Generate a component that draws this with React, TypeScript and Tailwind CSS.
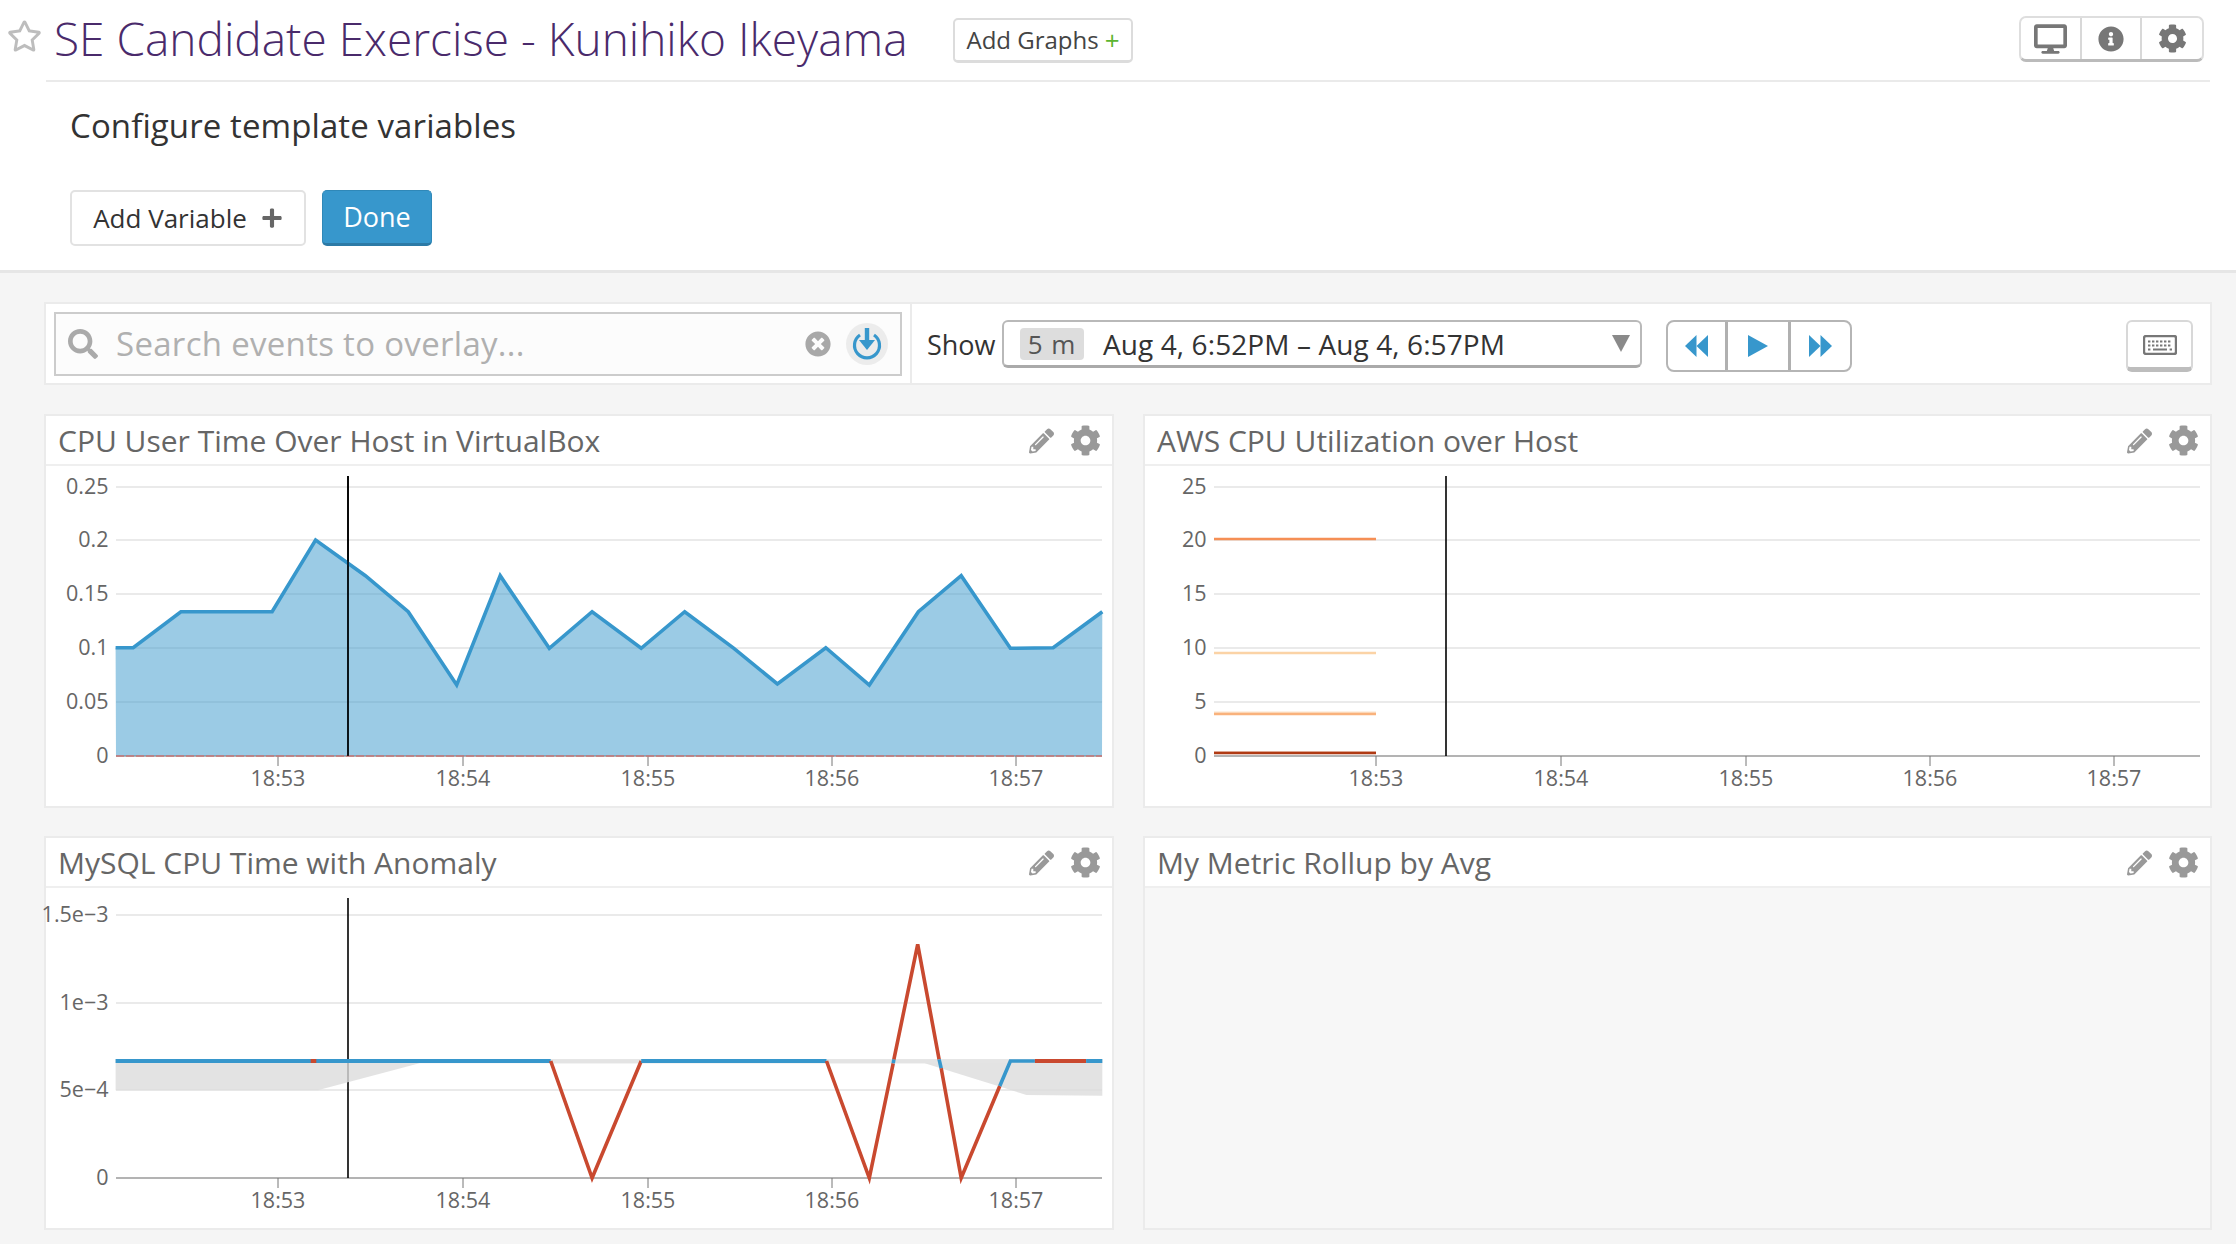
import React from "react";
import { FaRegStar, FaPlus, FaDesktop, FaInfoCircle, FaCog, FaPencilAlt, FaSearch, FaTimesCircle } from "react-icons/fa";

const sans = "font-['Open_Sans','Noto_Sans',sans-serif]";
const z1 = (x: number) => x / 1.425 + 30;

const toPts = (pts: number[][], oy: number) =>
  pts.map(([x, y]) => `${z1(x).toFixed(1)},${(y / 3 + oy).toFixed(1)}`).join(" ");

const cpu = [[122,713],[147,713],[215,605],[345,605],[407,390],[478,497],[539,605],[608,825],[670,497],[740,715],[801,605],[871,715],[933,605],[1003,715],[1065,822],[1134,713],[1196,825],[1266,605],[1327,497],[1397,715],[1458,713],[1528,605]];

const ticks = [["18:53", 278], ["18:54", 463], ["18:55", 648], ["18:56", 832], ["18:57", 1016]] as const;

function Axis({ base, labels, top, lineColor = "#9a9a9a" }: { base: number; labels: [string, number][]; top: number; lineColor?: string }) {
  return (
    <g fontFamily="'Open Sans', sans-serif" fontSize="21.5" fill="#666">
      {labels.map(([t, y]) => (
        <g key={t}>
          {t !== "0" && <line x1="116" x2="1102" y1={y} y2={y} stroke="#e3e3e3" strokeWidth="1.6" />}
          <text x="108.5" y={y + 7} textAnchor="end">{t}</text>
        </g>
      ))}
      <line x1="116" x2="1102" y1={base} y2={base} stroke={lineColor} strokeWidth="1.4" />
      {ticks.map(([t, x]) => (
        <g key={t}>
          <line x1={x} x2={x} y1={base} y2={base + 10} stroke="#777" strokeWidth="1" />
          <text x={x} y={base + 30} textAnchor="middle">{t}</text>
        </g>
      ))}
      <line x1="348" x2="348" y1={top} y2={base} stroke="#000" strokeWidth="1.6" />
    </g>
  );
}

function Chart1() {
  return (
    <svg viewBox="46 466 1066 340" className="block w-full h-[340px]">
      <Axis base={756} top={476} labels={[["0.25",487],["0.2",540],["0.15",594],["0.1",648],["0.05",702],["0",756]]} />
      <polygon points={`116,756 ${toPts(cpu, 410)} 1102,756`} fill="#3797cc" fillOpacity="0.5" />
      <polyline points={toPts(cpu, 410)} fill="none" stroke="#3797cc" strokeWidth="3.6" strokeLinejoin="miter" />
      <line x1="116" x2="1102" y1="756" y2="756" stroke="#c77" strokeWidth="1.4" strokeDasharray="8 2" />
      <line x1="348" x2="348" y1="476" y2="756" stroke="#000" strokeWidth="1.6" />
    </svg>
  );
}

function Chart2() {
  const seg = (y: number, c: string, w = 2.5) => <line x1="116" x2="278" y1={y} y2={y} stroke={c} strokeWidth={w} />;
  return (
    <svg viewBox="47 466 1065 340" className="block w-full h-[340px]">
      <Axis base={756} top={476} labels={[["25",487],["20",540],["15",594],["10",648],["5",702],["0",756]]} />
      {seg(540, "#e8e8e8", 2)}
      {seg(539, "#f58f55")}
      {seg(653, "#fbd3a6")}
      {seg(712.5, "#fce3cb", 2)}
      {seg(714, "#f9b27c")}
      {seg(752, "#e6b9a5", 1.5)}
      {seg(753, "#b03a14")}
    </svg>
  );
}

function Chart3() {
  const red = "#c9492f";
  const blue = "#3797cc";
  const line = (pts: number[][], c: string, w = 3.6) => (
    <polyline points={toPts(pts, 830)} fill="none" stroke={c} strokeWidth={w} />
  );
  const band = [[122,688],[1528,688],[1528,797],[1420,795],[1275,700],[555,700],[410,781],[122,781]];
  return (
    <svg viewBox="46 888 1066 340" className="block w-full h-[340px] overflow-visible">
      <Axis base={1178} top={898} labels={[["1.5e\u22123",915],["1e\u22123",1003],["5e\u22124",1090],["0",1178]]} />
      <polygon points={toPts(band, 830)} fill="#dcdcdc" fillOpacity="0.8" />
      <polygon points={toPts([[742,688],[1528,688],[1528,700],[742,700]], 830)} fill="#e4e4e4" />
      {line([[122,693],[742,693]], blue, 4)}
      {line([[400,693],[408,693]], red, 4)}
      {line([[742,693],[801,1044],[871,693]], red)}
      {line([[871,693],[1135,693]], blue, 4)}
      {line([[1135,693],[1196,1044],[1230,700]], red)}
      {line([[1230,700],[1231,688]], blue)}
      {line([[1231,688],[1265,343],[1295.5,688]], red)}
      {line([[1295.5,688],[1298.5,715]], blue)}
      {line([[1298.5,715],[1327,1044],[1382,768]], red)}
      {line([[1382,768],[1397,693],[1432,693]], blue)}
      {line([[1432,693],[1505,693]], red, 4)}
      {line([[1505,693],[1528,693]], blue, 4)}
    </svg>
  );
}

function Panel({ title, children, className = "bg-white" }: { title: string; children?: React.ReactNode; className?: string }) {
  return (
    <div className={`border-2 border-[#ebebeb] h-[394px] flex flex-col ${className}`}>
      <div className="h-[50px] bg-white border-b-2 border-[#efefef] flex items-center pl-[12px] pr-[11px] shrink-0">
        <span className="text-[30px] leading-none text-[#666] flex-1 font-normal pt-[2px]">{title}</span>
        <FaPencilAlt className="text-[#999] w-[25px] h-[26px] mr-[16px] mt-[2px]" />
        <FaCog className="text-[#999] w-[31px] h-[31px]" />
      </div>
      {children}
    </div>
  );
}

function Triangles({ dir, n }: { dir: "l" | "r"; n: 1 | 2 }) {
  const w = n === 2 ? 23 : 20;
  return (
    <svg width={w} height="22" viewBox={`0 0 ${w} 22`} className={dir === "l" ? "-scale-x-100" : ""}>
      {n === 2 ? (
        <>
          <polygon points="0,0 11.5,11 0,22" fill="#3797cc" />
          <polygon points="11.5,0 23,11 11.5,22" fill="#3797cc" />
        </>
      ) : (
        <polygon points="0,0 20,11 0,22" fill="#3797cc" />
      )}
    </svg>
  );
}

export default function App() {
  return (
    <div className={`w-[2236px] h-[1244px] overflow-hidden bg-[#f5f5f5] ${sans}`}>
      <div className="bg-white h-[273px] border-b-[3px] border-[#e6e6e6]">
        <div className="flex h-[82px]">
          <div className="w-[46px] pl-[7px] pt-[20px] shrink-0">
            <FaRegStar className="text-[#bdbdbd] w-[35px] h-[32px]" />
          </div>
          <div className="flex-1 mr-[26px] border-b-2 border-[#eaeaea] flex items-start pl-[8px]">
            <h1 className="text-[46px] leading-[77px] font-light text-[#4a2a6b] w-[899px] shrink-0 whitespace-nowrap">SE Candidate Exercise - Kunihiko Ikeyama</h1>
            <button className="mt-[18px] w-[180px] h-[45px] border-2 border-[#dcdcdc] border-b-[3px] rounded-[5px] text-[24px] leading-none text-[#444] flex items-center justify-center gap-[6px] whitespace-nowrap">
              Add Graphs <span className="text-[#5cb531] text-[26px] font-medium">+</span>
            </button>
            <div className="ml-auto mr-[6px] mt-[16px] h-[46px] w-[185px] border-2 border-[#dedede] border-b-[3px] border-b-[#bbbbbb] rounded-[7px] flex items-center text-[#777]">
              <div className="w-[61px] h-full flex items-center justify-center border-r-2 border-[#d8d8d8]"><FaDesktop className="w-[33px] h-[30px]" /></div>
              <div className="w-[60px] h-full flex items-center justify-center border-r-2 border-[#d8d8d8]"><FaInfoCircle className="w-[26px] h-[26px]" /></div>
              <div className="flex-1 h-full flex items-center justify-center"><FaCog className="w-[29px] h-[29px]" /></div>
            </div>
          </div>
        </div>
        <div className="pl-[70px] pt-[22px]">
          <h2 className="text-[33px] leading-[44px] text-[#333] font-medium tracking-[0.1px]">Configure template variables</h2>
          <div className="flex gap-[16px] mt-[42px]">
            <button className="w-[236px] h-[56px] border-2 border-[#e2e2e2] rounded-[5px] text-[26px] text-[#333] flex items-center justify-center gap-[14px]">
              Add Variable <FaPlus className="text-[#666] w-[22px] h-[22px]" />
            </button>
            <button className="w-[110px] h-[56px] bg-[#3797cc] border border-[#2f88b8] border-b-[3px] border-b-[#2c7aa6] rounded-[5px] text-[27px] text-white font-medium">Done</button>
          </div>
        </div>
      </div>

      <div className="pl-[44px] pr-[24px] pt-[29px]">
        <div className="h-[83px] bg-white border-2 border-[#ebebeb] flex">
          <div className="w-[866px] border-r-2 border-[#ebebeb] pl-[8px] pt-[8px] shrink-0">
            <div className="w-[848px] h-[64px] bg-[#fcfcfc] border-2 border-[#cccccc] flex items-center pl-[12px] pr-[12px]">
              <FaSearch className="text-[#aaa] w-[30px] h-[30px] shrink-0" />
              <span className="ml-[18px] text-[33px] text-[#b0b0b0] flex-1 tracking-[0.3px] whitespace-nowrap">Search events to overlay...</span>
              <FaTimesCircle className="text-[#a8a8a8] w-[26px] h-[26px] shrink-0" />
              <div className="ml-[15px] w-[42px] h-[42px] rounded-full bg-[#ececec] flex items-center justify-center shrink-0">
                <svg width="30" height="32" viewBox="0 0 30 32">
                  <path d="M8 7 A12.5 12.5 0 1 0 22 7" fill="none" stroke="#3797cc" strokeWidth="3.2" />
                  <rect x="12.8" y="0" width="4.4" height="13" fill="#3797cc" />
                  <polygon points="7,12 23,12 15,22" fill="#3797cc" />
                </svg>
              </div>
            </div>
          </div>
          <div className="flex-1 flex items-start pt-[16px] pl-[15px] pr-[17px]">
            <span className="text-[27px] leading-[50px] text-[#333] w-[75px] shrink-0">Show</span>
            <div className="w-[640px] h-[48px] border-2 border-[#b9b9b9] border-b-[3px] border-b-[#aaaaaa] rounded-[6px] flex items-center pl-[16px] pr-[10px] shrink-0">
              <span className="w-[64px] h-[32px] rounded-[4px] bg-[#dddddd] text-[26px] leading-[32px] text-[#555] text-center tracking-[1px]">5 m</span>
              <span className="ml-[19px] text-[28px] text-[#333] flex-1 whitespace-nowrap tracking-[0.1px]">Aug 4, 6:52PM – Aug 4, 6:57PM</span>
              <svg width="18" height="17" viewBox="0 0 18 17"><polygon points="0,0 18,0 9,17" fill="#8a8a8a" /></svg>
            </div>
            <div className="ml-[24px] w-[186px] h-[52px] border-2 border-[#b5b5b5] rounded-[8px] flex shrink-0">
              <div className="w-[60px] flex items-center justify-center border-r-[3px] border-[#b0b0b0]"><Triangles dir="l" n={2} /></div>
              <div className="w-[63px] flex items-center justify-center border-r-[3px] border-[#b0b0b0]"><Triangles dir="r" n={1} /></div>
              <div className="flex-1 flex items-center justify-center"><Triangles dir="r" n={2} /></div>
            </div>
            <div className="ml-auto w-[67px] h-[52px] border-2 border-[#d8d8d8] border-b-[5px] border-b-[#bdbdbd] rounded-[6px] flex items-center justify-center shrink-0">
              <svg width="34" height="20" viewBox="0 0 34 20">
                <rect x="1" y="1" width="32" height="18" rx="2" fill="none" stroke="#777" strokeWidth="2.4" />
                <path d="M5 6.5h24M5 10.5h24" stroke="#777" strokeWidth="2" strokeDasharray="2.4 1.6" />
                <path d="M5 14.5h2.4M10 14.5h14M26.6 14.5h2.4" stroke="#777" strokeWidth="2" />
              </svg>
            </div>
          </div>
        </div>

        <div className="grid grid-cols-[1070px_1069px] gap-x-[29px] gap-y-[28px] mt-[29px]">
          <Panel title="CPU User Time Over Host in VirtualBox"><Chart1 /></Panel>
          <Panel title="AWS CPU Utilization over Host"><Chart2 /></Panel>
          <Panel title="MySQL CPU Time with Anomaly"><Chart3 /></Panel>
          <Panel title="My Metric Rollup by Avg" className="bg-[#f7f7f7]" />
        </div>
      </div>
    </div>
  );
}
